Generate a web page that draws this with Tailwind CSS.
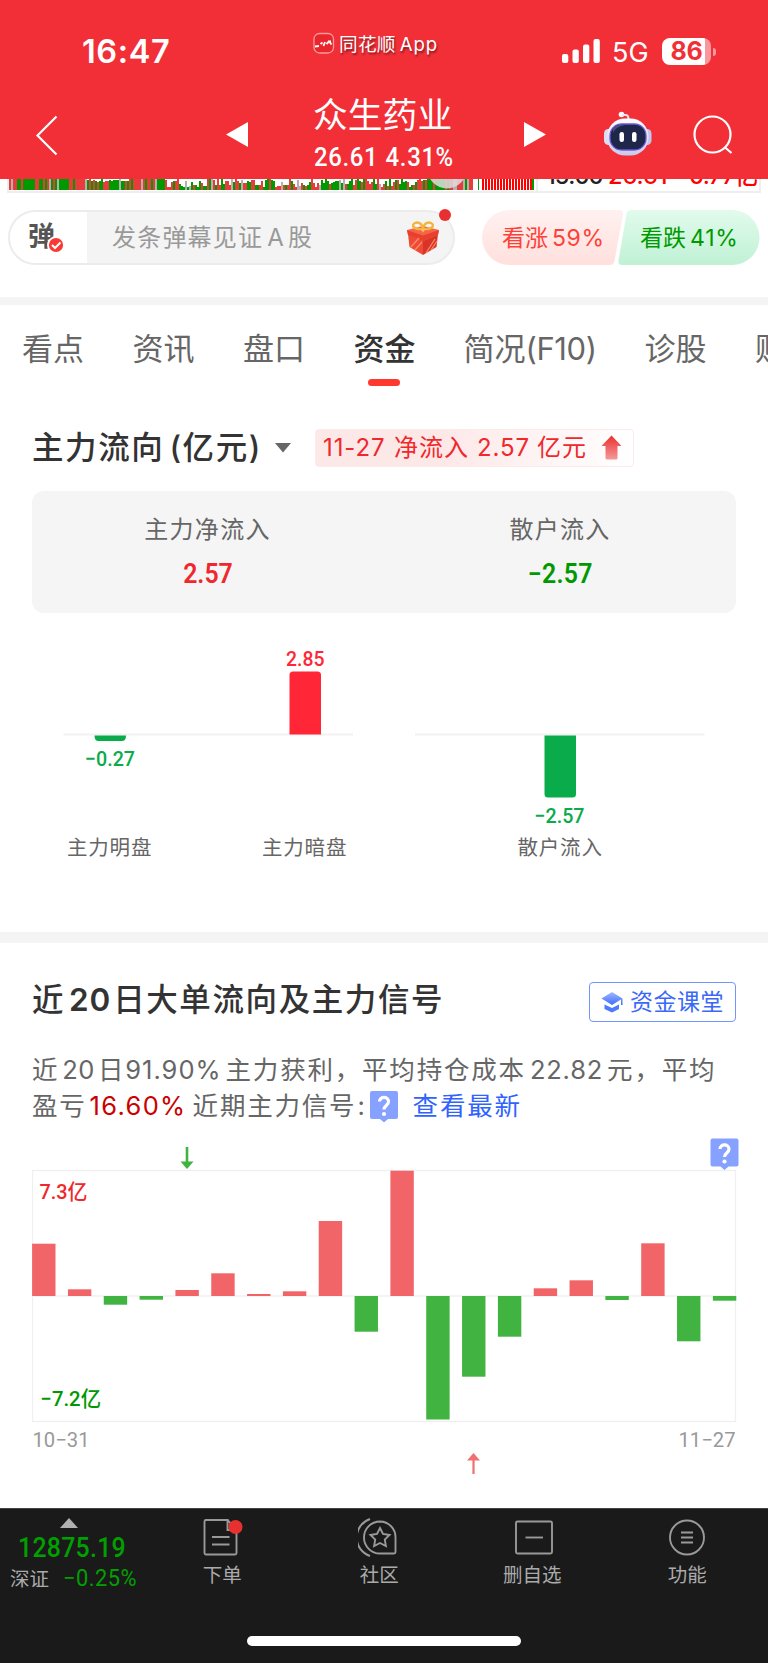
<!DOCTYPE html>
<html lang="zh-CN">
<head>
<meta charset="utf-8">
<title>众生药业 资金</title>
<script src="https://cdn.jsdelivr.net/npm/@tailwindcss/browser@4"></script>
</head>
<body class="w-[768px] h-[1663px] overflow-hidden bg-white font-['Inter','Noto_Sans_CJK_SC',sans-serif] text-[#333] whitespace-nowrap">
<div class="flex h-[1663px] flex-col">

  <header class="h-[179px] shrink-0 bg-[#f22f37] text-white">
    <div class="flex h-[88px] items-start">
      <div class="ml-[82px] mt-[36px] w-[231px] text-[32.5px]/[32px] font-semibold tracking-[0.6px]">16:47</div>
      <div class="mt-[32px] flex w-[249px] items-center">
        <svg class="-mt-[2px] h-[22px] w-[22px]" viewBox="0 0 22 22" fill="none"><rect x="1" y="1.5" width="19.500" height="19.500" rx="5.500" fill="#e9262c" stroke="#f79a9c" stroke-width="1.300"/><path d="M2 14.500l4-.5M7.500 12l2-1.500M10.500 14l1.500-4M13.500 12l2-2M17 10.500l1.500 2" stroke="#fff" stroke-width="1.800"/><path d="M15 8.500h3v2.500h-3z" fill="#fff"/></svg>
        <span class="ml-[4px] text-[18.6px]/[24px] tracking-[0.3px] [text-shadow:1px_2px_2px_rgba(0,0,0,.45)]">同花顺<span class="ml-[4px] tracking-[0.9px]">App</span></span>
      </div>
      <svg class="mt-[38px] h-[26px] w-[40px]" viewBox="0 0 40 26" fill="#fff"><rect y="16" width="6.300" height="9" rx="2"/><rect x="10.500" y="11.500" width="6.300" height="13.500" rx="2"/><rect x="21" y="6.500" width="6.300" height="18.500" rx="2"/><rect x="31.500" y="1" width="6.300" height="24" rx="2"/></svg>
      <span class="ml-[10px] mt-[39px] w-[50px] text-[27px]/[28px] tracking-[0.2px]">5G</span>
      <div class="mt-[38px] flex items-center">
        <div class="flex h-[27px] w-[49px] items-center justify-center rounded-[8px] bg-[linear-gradient(90deg,#fff_43px,#f9989c_43px)] text-[25px]/[27px] font-bold tracking-[-0.3px] text-[#f22f37]">86</div>
        <div class="ml-[2px] h-[8px] w-[3px] rounded-r-full bg-[#f9989c]"></div>
      </div>
    </div>
    <div class="flex h-[91px] items-start">
      <svg class="ml-[34px] mt-[27px] h-[41px] w-[26px]" viewBox="0 0 26 41" fill="none" stroke="#fff" stroke-width="2.200"><path d="M22.500 1.500L3.500 20.500l19 19"/></svg>
      <svg class="ml-[166px] mt-[34px] h-[25px] w-[22px]" viewBox="0 0 22 25" fill="#fff"><path d="M22 0v25L0 12.500z"/></svg>
      <div class="ml-[65px] w-[142px]">
        <div class="mt-[7px] text-[34.8px]/[40px]">众生药业</div>
        <div class="mt-[8px] ml-[1px] h-[28px] origin-left scale-x-[0.92] font-[Roboto] text-[26px]/[28px] font-medium tracking-[0.7px]"><span>26.61</span><span class="ml-[8px]">4.31%</span></div>
      </div>
      <svg class="ml-[69px] mt-[34px] h-[25px] w-[22px]" viewBox="0 0 22 25" fill="#fff"><path d="M0 0v25l22-12.500z"/></svg>
      <svg class="ml-[57px] mt-[23px] h-[46px] w-[50px]" viewBox="0 0 50 46">
        <defs><linearGradient id="shell" x1="0" y1="0" x2="0" y2="1"><stop offset="0" stop-color="#fff"/><stop offset="1" stop-color="#c9c9ec"/></linearGradient></defs>
        <circle cx="18.500" cy="3.500" r="2.800" fill="#fff"/><path d="M19 4h3.500q3 0 3 4" fill="none" stroke="#e8e4f8" stroke-width="2"/>
        <rect x="1" y="18" width="9" height="16" rx="4.500" fill="#dcdcf4"/><rect x="39.500" y="18" width="9" height="16" rx="4.500" fill="#c3c6ea"/>
        <rect x="4" y="7.500" width="41.500" height="37" rx="18" fill="url(#shell)"/>
        <rect x="7" y="13" width="36" height="26" rx="11.500" fill="#1e2749" stroke="#6d5ad8" stroke-width="1.300"/>
        <path d="M10 18q3-5 12-4-10 2-12 8z" fill="#48507a"/>
        <rect x="16.500" y="21" width="4.500" height="10" rx="2.200" fill="#fff"/><rect x="29" y="21" width="4.500" height="10" rx="2.200" fill="#fff"/>
      </svg>
      <svg class="ml-[39px] mt-[26px] h-[42px] w-[42px]" viewBox="0 0 42 42" fill="none" stroke="#fff" stroke-width="2.200"><circle cx="20.500" cy="20.500" r="18"/><path d="M32.500 33l7 6"/></svg>
    </div>
  </header>

  <div class="ml-[7px] flex h-[14px] w-[754px] shrink-0 overflow-hidden border-x-2 border-b-2 border-[#eee]">
    <svg class="h-[12px] w-[526px] shrink-0" viewBox="9 179 526 12"><g id="volume" shape-rendering="crispEdges"></g><circle cx="447" cy="169" r="19.500" fill="#ddd" opacity=".85"/></svg>
    <div class="ml-[1px] flex h-[12px] items-end border-l-2 border-[#eee] pl-[8px] text-[23.5px] font-medium">
      <div class="-mb-[1px] flex h-[32px] items-center text-[#222]"><span class="w-[62px] tracking-[-1px]">15:00</span><span class="w-[81px] text-[#f00]">26.61</span><span class="tracking-[-0.7px] text-[#f00]">0.77亿</span></div>
    </div>
  </div>

  <div class="flex h-[104px] shrink-0 items-start pl-[8px] pt-[17px]">
    <div class="relative flex h-[55px] w-[447px] items-center rounded-full border-2 border-[#ececec] bg-[#f4f4f4]">
      <div class="relative flex h-[51px] w-[77px] items-center rounded-l-full bg-white pl-[18px]">
        <span class="-mt-[2px] text-[27px]/[30px] font-bold text-[#555]">弹</span>
        <svg class="absolute left-[37px] top-[24px] h-[18px] w-[18px]" viewBox="0 0 18 18"><circle cx="9" cy="9" r="8" fill="#f83a34" stroke="#fff" stroke-width="1.800"/><path d="M5 9l3 3 5.500-5.500" fill="none" stroke="#fff" stroke-width="2"/></svg>
      </div>
      <span class="ml-[25px] text-[24px]/[30px] tracking-[1.2px] text-[#999]">发条弹幕见证<span class="ml-[4px] mr-[3px]">A</span>股</span>
      <svg class="absolute left-[395px] top-[8px] h-[36px] w-[36px]" viewBox="0 0 36 36">
        <path d="M3 14l15 6v15L4.500 27z" fill="#ee4b36"/><path d="M33 14l-15 6v15l13.500-8z" fill="#d8342a"/><path d="M2 10l16-4 16 4-1 5-15 6-15-6z" fill="#f8644a"/><path d="M2 10l16 5.500L34 10l-1 5-15 6-15-6z" fill="#e8402f"/>
        <path d="M6 27l8-9M10 30l7-8M21 33l9-14M26 30l6-9" stroke="#ff8b66" stroke-width="1.200"/>
        <g fill="none" stroke="#f2b43c" stroke-width="2.400"><path d="M18 9C8 10 6 5 10 3s8 2 8 6zM18 9c10 1 12-4 8-6s-8 2-8 6z"/></g><path d="M15.500 9h5L18 12.500z" fill="#f7c65a"/>
      </svg>
      <div class="absolute left-[429px] top-[-3px] h-[12px] w-[12px] rounded-full bg-[#e93030]"></div>
    </div>
    <div class="relative ml-[27px] h-[55px] w-[279px]">
      <svg class="absolute inset-0" width="278" height="55" viewBox="0 0 279 55" preserveAspectRatio="none">
        <defs><linearGradient id="up" x1="0" y1="0" x2="0" y2="1"><stop offset="0" stop-color="#fff1f0"/><stop offset="1" stop-color="#ffe0dd"/></linearGradient><linearGradient id="down" x1="0" y1="0" x2="0" y2="1"><stop offset="0" stop-color="#e2fbec"/><stop offset="1" stop-color="#bff1d5"/></linearGradient></defs>
        <path d="M27.500 0H137q5 0 4.500 4L133 51q-.8 4-5 4H27.500a27.500 27.500 0 0 1 0-55z" fill="url(#up)"/>
        <path d="M150 0h101a27.500 27.500 0 0 1 0 55H141q-4.500 0-4-4l8-47q.8-4 5-4z" fill="url(#down)"/>
      </svg>
      <div class="relative flex h-[55px] items-center text-[23px]/[30px]">
        <span class="ml-[20px] w-[138px] text-[#ff4038]">看涨<span class="ml-[4px] tracking-[0.6px]">59%</span></span>
        <span class="text-[#090]">看跌<span class="ml-[4px] tracking-[0.8px]">41%</span></span>
      </div>
    </div>
  </div>

  <div class="h-[8px] shrink-0 bg-[#f4f4f4]"></div>

  <nav class="flex h-[85px] shrink-0 gap-[48.500px] overflow-hidden pl-[22px] pt-[23px] text-[31px]/[42px] text-[#666]">
    <span class="shrink-0">看点</span><span class="shrink-0">资讯</span><span class="shrink-0">盘口</span>
    <span class="flex shrink-0 flex-col items-center font-medium text-[#333]">资金<i class="mt-[9px] mr-[1px] h-[7px] w-[32px] rounded-full bg-[#ff3830]"></i></span>
    <span class="-ml-[0.500px] shrink-0">简况<span class="tracking-[-0.4px]">(F10)</span></span><span class="-ml-[0.500px] shrink-0">诊股</span><span class="shrink-0">财务</span>
  </nav>

  <section class="h-[542px] shrink-0 px-[32px] pt-[39px]">
    <div class="flex h-[38px] items-center">
      <h2 class="w-[243px] text-[31.5px]/[38px] font-medium tracking-[1.6px]">主力流向<span class="ml-[5px]">(亿元)</span></h2>
      <svg class="h-[10px] w-[16px]" viewBox="0 0 16 10" fill="#666"><path d="M0 0h16L8 9.500z"/></svg>
      <div class="-mt-[1px] ml-[24px] flex h-[38px] w-[319px] items-center rounded-[4px] border border-[#fdeaea] bg-linear-to-r from-[#fde8e8] from-40% to-white pl-[7px] text-[24px]/[36px] text-[#f0282d]">
        <span class="w-[71px] tracking-[0.9px]">11-27</span><span class="w-[83px] tracking-[1px]">净流入</span><span class="w-[60px] tracking-[0.9px]">2.57</span><span class="w-[64px] tracking-[1px]">亿元</span>
        <svg class="h-[25px] w-[21px]" viewBox="0 0 21 25"><defs><linearGradient id="rise" x1="0" y1="0" x2="0" y2="1"><stop offset="0" stop-color="#e93030"/><stop offset="1" stop-color="#f59a9a"/></linearGradient></defs><path d="M10.500.5L20.500 11h-4v12q0 1.500-1.500 1.500H6q-1.500 0-1.500-1.500V11h-4z" fill="url(#rise)"/></svg>
      </div>
    </div>
    <div class="mt-[24px] grid h-[122px] grid-cols-2 rounded-[12px] bg-[#f5f5f5] text-center">
      <div><div class="mt-[24px] -ml-[1px] text-[24px]/[30px] tracking-[1.3px] text-[#666]">主力净流入</div><div class="mt-[15px] inline-block scale-x-[0.92] font-[Roboto] text-[27px]/[28px] font-semibold text-[#f0282d]">2.57</div></div>
      <div><div class="mt-[24px] text-[24px]/[30px] tracking-[1.3px] text-[#666]">散户流入</div><div class="mt-[15px] inline-block scale-x-[0.92] font-[Roboto] text-[27px]/[28px] font-semibold tracking-[0.3px] text-[#090]">−2.57</div></div>
    </div>
    <svg class="mt-[18px] block h-[250px] w-[704px]" viewBox="32 631 704 250" font-family="Roboto, 'Noto Sans CJK SC', sans-serif" font-size="21" font-weight="500">
      <path d="M63.500 734.500H353M415 734.500h289.500" stroke="#f1f1f1" stroke-width="2"/>
      <path d="M94.500 735.500h31.500q0 5.500-4 5.500h-23.500q-4 0-4-5.500z" fill="#09ab4b"/>
      <path d="M289.500 734.500v-59.500q0-3.500 3.500-3.500h24.500q3.500 0 3.500 3.500v59.500z" fill="#ff2638"/>
      <path d="M544.500 735.500v58.500q0 3.500 3.500 3.500h24.500q3.500 0 3.500-3.500v-58.500z" fill="#09ab4b"/>
      <g fill="#09ab4b"><text x="85" y="766" textLength="50" lengthAdjust="spacingAndGlyphs">−0.27</text><text x="534.500" y="823" textLength="50" lengthAdjust="spacingAndGlyphs">−2.57</text></g>
      <text x="286" y="666" textLength="38.500" lengthAdjust="spacingAndGlyphs" fill="#ff2638">2.85</text>
      <g fill="#666" font-size="20.500" font-weight="400" letter-spacing="0.8"><text x="67" y="854.500">主力明盘</text><text x="262" y="854.500">主力暗盘</text><text x="517.500" y="854.500">散户流入</text></g>
    </svg>
  </section>

  <div class="h-[11px] shrink-0 bg-[#f4f4f4]"></div>

  <section class="h-[565px] shrink-0 px-[32px] pt-[39px]">
    <div class="flex h-[40px] items-center justify-between">
      <h2 class="-mt-[5px] text-[31.5px]/[38px] font-medium tracking-[1.6px]">近<span class="ml-[4px] mr-[2px] font-semibold tracking-[0.8px]">20</span>日大单流向及主力信号</h2>
      <div class="flex h-[40px] w-[147px] items-center rounded-[4px] border-[1.500px] border-[#7296ff] pl-[11px] text-[23px]/[36px] tracking-[0.5px] text-[#3a68f8]">
        <svg class="mr-[7px] h-[22px] w-[22px]" viewBox="0 0 22 22"><defs><linearGradient id="cap" x1="0" y1="0" x2="0" y2="1"><stop offset="0" stop-color="#a2b9ff"/><stop offset="1" stop-color="#3d6cff"/></linearGradient></defs><path d="M11 1l10.500 6.500V14H20V8.500L11 14 .5 7.500z" fill="url(#cap)"/><path d="M3.500 13.500l7.500 3.500 7-3.500v4.500L11 21.500 3.500 18z" fill="#4d7aff"/></svg>资金课堂
      </div>
    </div>
    <div class="mt-[30px] text-[25.500px]/[36px] tracking-[1.8px] text-[#666]">
      <div>近<span class="mx-[3px] tracking-[0.5px]">20</span>日<span class="mr-[4px] tracking-[1px]">91.90%</span>主力获利，平均持仓成本<span class="mx-[4px] tracking-[0.8px]">22.82</span>元，平均</div>
      <div class="flex h-[36px] items-center">盈亏<span class="ml-[3px] w-[103px] tracking-[1.3px] text-[#c00]">16.60%</span><span class="w-[177px]">近期主力信号<span class="ml-[1px]">:</span></span>
        <svg class="h-[31px] w-[28px]" viewBox="0 0 28 31"><path d="M2 0h24q2 0 2 2v24q0 2-2 2h-8l-4 3.500L10 28H2q-2 0-2-2V2q0-2 2-2z" fill="#86a1ff"/><path d="M9.500 10.500C9.500 5 18.500 5 18.500 10.500c0 4-4.500 4-4.500 8" fill="none" stroke="#fff" stroke-width="3.200"/><circle cx="14" cy="23" r="2.100" fill="#fff"/></svg>
        <span class="ml-[15px] text-[#2f62ff]">查看最新</span>
      </div>
    </div>
    <svg class="mt-[6px] block h-[360px] w-[708px]" viewBox="32 1130 708 360" font-family="Roboto, 'Noto Sans CJK SC', sans-serif" font-size="21" font-weight="500">
      <rect x="32.500" y="1170.500" width="703" height="251" fill="none" stroke="#efefef" stroke-width="1.300"/>
      <path d="M32 1296H736" stroke="#f1f1f1" stroke-width="1.300"/>
      <g id="flow"></g>
      <path d="M187 1147v15" stroke="#41b340" stroke-width="2.600"/><path d="M180.500 1161.500h13l-6.500 7.500z" fill="#41b340"/>
      <path d="M473.500 1474v-16" stroke="#f07070" stroke-width="2.200"/><path d="M467 1460.500h13l-6.500-7.500z" fill="#f07070"/>
      <g transform="translate(710.500 1138.500)"><path d="M2 0h24q2 0 2 2v24q0 2-2 2h-8l-4 3.500L10 28H2q-2 0-2-2V2q0-2 2-2z" fill="#86a1ff"/><path d="M9.500 10.500C9.500 5 18.500 5 18.500 10.500c0 4-4.500 4-4.500 8" fill="none" stroke="#fff" stroke-width="3.200"/><circle cx="14" cy="23" r="2.100" fill="#fff"/></g>
      <text x="39.500" y="1199" textLength="48" lengthAdjust="spacingAndGlyphs" fill="#f0282d">7.3亿</text>
      <text x="40.500" y="1406" textLength="60.500" lengthAdjust="spacingAndGlyphs" fill="#090">−7.2亿</text>
      <g fill="#999" font-weight="400"><text x="32.500" y="1447" textLength="57" lengthAdjust="spacingAndGlyphs">10−31</text><text x="678.500" y="1447" textLength="57" lengthAdjust="spacingAndGlyphs">11−27</text></g>
    </svg>
  </section>

  <footer class="flex h-[155px] shrink-0 flex-col justify-between border-t border-[#444] bg-[#1a1a1a] text-[#aaa]">
    <div class="flex text-[19.500px]/[24px]">
      <div class="w-[144px] shrink-0">
        <svg class="ml-[60px] mt-[9px] block h-[10px] w-[18px]" viewBox="0 0 18 10" fill="#b0b0b0"><path d="M9 0l9 10H0z"/></svg>
        <div class="ml-[18px] mt-[5px] origin-left scale-x-[0.92] font-[Roboto] text-[27px]/[30px] font-medium tracking-[0.3px] text-[#00a000]">12875.19</div>
        <div class="mt-[4px] flex items-center pl-[10px]"><span>深证</span><span class="ml-[14px] origin-left scale-x-[0.95] font-[Roboto] text-[23px]/[24px] tracking-[0.500px] text-[#00a000]">−0.25%</span></div>
      </div>
      <div class="flex w-[157px] flex-col items-center">
        <svg class="mt-[9px] h-[40px] w-[42px]" viewBox="201 1518 42 40" fill="none" stroke="#999" stroke-width="1.900"><path d="M227.500 1520H206q-1.500 0-1.500 1.500v31.500q0 1.500 1.500 1.500h29q1.500 0 1.500-1.500V1530h-9z"/><path d="M227.500 1520l9 10M212 1537h17.500M212 1544.500h17.500"/><circle cx="235.500" cy="1527" r="7" fill="#e93030" stroke="none"/></svg>
        <span class="mt-[5px]">下单</span>
      </div>
      <div class="flex w-[158px] flex-col items-center">
        <svg class="mt-[9px] h-[40px] w-[42px]" viewBox="359 1518 42 40" fill="none" stroke="#999" stroke-width="1.900"><path d="M381 1521.500a16 16 0 1 0 0 32h14q1.500 0 1.500-1.500v-14.500a15.700 15.700 0 0 0-15.500-16z"/><path d="M371 1519a19.500 19.500 0 0 0 0 37"/><path d="M381 1528l3 6 6.500 1-4.700 4.600 1.100 6.500-5.900-3.100-5.900 3.100 1.100-6.500-4.700-4.600 6.500-1z"/></svg>
        <span class="mt-[5px]">社区</span>
      </div>
      <div class="flex w-[149px] flex-col items-center">
        <svg class="mt-[9px] h-[40px] w-[42px]" viewBox="512 1518 42 40" fill="none" stroke="#999" stroke-width="1.900" overflow="visible"><rect x="517" y="1521.500" width="36" height="32" rx="1.500"/><path d="M526.500 1537.500h17.500"/></svg>
        <span class="mt-[5px]">删自选</span>
      </div>
      <div class="flex w-[162px] flex-col items-center">
        <svg class="mt-[9px] h-[40px] w-[42px]" viewBox="668 1518 42 40" fill="none" stroke="#999" stroke-width="1.900"><circle cx="689" cy="1537.500" r="17"/><path d="M683 1532.500h12M683 1537.500h12M683 1542.500h12"/></svg>
        <span class="mt-[5px]">功能</span>
      </div>
    </div>
    <div class="mb-[17px] ml-[247px] h-[10px] w-[274px] rounded-full bg-white"></div>
  </footer>
</div>
<script>
  // Daily net flow: pixel heights, positive = inflow, negative = outflow
  const flow = [52.3, 6.7, -8.7, -3.7, 6, 22.7, 2, 4.7, 75, -35.7, 125.3, -123.5, -80.7, -40.7, 7.7, 15.7, -4, 52.7, -45.3, -4.7];
  document.getElementById('flow').innerHTML = flow.map((v, i) =>
    `<rect x="${32.1 + i * 35.83}" y="${v > 0 ? 1296 - v : 1296}" width="23.4" height="${Math.abs(v)}" fill="${v > 0 ? '#f16568' : '#41b340'}"/>`).join('');

  // Minute volume bars along the bottom of the price chart
  let seed = 7;
  const rnd = () => (seed = (seed * 16807) % 2147483647) / 2147483647;
  let bars = '';
  for (let x = 9; x < 473; x += 2) {
    const full = x < 165 || x > 426;
    const h = full ? (x > 85 && x < 130 ? 8 + rnd() * 4 : 12) : 3 + rnd() * 9;
    const c = rnd();
    bars += `<rect x="${x}" y="${190.2 - h}" width="2" height="${h}" fill="${c < .47 ? '#e83c3c' : c < .92 ? '#090' : '#b5b0b0'}"/>`;
  }
  bars += '<rect x="478" y="179" width="1" height="11" fill="#090"/>';
  for (let x = 482; x < 531; x += 3) bars += `<rect x="${x}" y="179" width="2" height="11" fill="#f00"/>`;
  bars += '<rect x="532" y="179" width="2" height="11" fill="#090"/>';
  document.getElementById('volume').innerHTML = bars;
</script>
</body>
</html>
